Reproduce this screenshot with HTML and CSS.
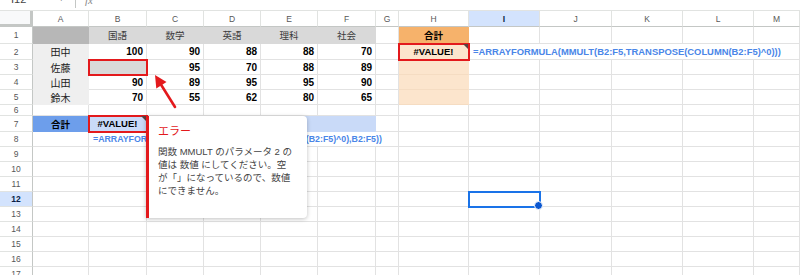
FILE: index.html
```html
<!DOCTYPE html>
<html lang="ja">
<head>
  <meta charset="UTF-8" />
  <title>合計 - スプレッドシート</title>
  <link rel="stylesheet" href="styles.css">
</head>
<body>
<div class="page">

  <!-- formula bar, mostly scrolled out of view -->
  <div class="formula-bar">
    <span class="name-box">I12</span>
    <span class="caret">&#9662;</span>
    <span class="bar-sep"></span>
    <span class="fx">fx</span>
  </div>

  <div class="sheet">
    <!-- column headers -->
    <div class="corner"></div>
    <div class="ch">A</div><div class="ch">B</div><div class="ch">C</div><div class="ch">D</div>
    <div class="ch">E</div><div class="ch">F</div><div class="ch">G</div><div class="ch">H</div>
    <div class="ch on">I</div><div class="ch">J</div><div class="ch">K</div><div class="ch">L</div><div class="ch">M</div>

    <!-- 1 -->
    <div class="rh">1</div>
    <div class="c fill-dark"></div>
    <div class="c fill-gray ctr">国語</div>
    <div class="c fill-gray ctr">数学</div>
    <div class="c fill-gray ctr">英語</div>
    <div class="c fill-gray ctr">理科</div>
    <div class="c fill-gray ctr">社会</div>
    <div class="c"></div>
    <div class="c fill-orange ctr b">合計</div>
    <div class="c"></div><div class="c"></div><div class="c"></div><div class="c"></div><div class="c"></div>

    <!-- 2 -->
    <div class="rh">2</div>
    <div class="c fill-light ctr">田中</div>
    <div class="c num">100</div>
    <div class="c num">90</div>
    <div class="c num">88</div>
    <div class="c num">88</div>
    <div class="c num">70</div>
    <div class="c"></div>
    <div class="c fill-peach ctr b mark err">#VALUE!</div>
    <div class="c formula span5">=ARRAYFORMULA(MMULT(B2:F5,TRANSPOSE(COLUMN(B2:F5)^0)))</div>

    <!-- 3 -->
    <div class="rh">3</div>
    <div class="c fill-light ctr">佐藤</div>
    <div class="c fill-gray mark"></div>
    <div class="c num">95</div>
    <div class="c num">70</div>
    <div class="c num">88</div>
    <div class="c num">89</div>
    <div class="c"></div>
    <div class="c fill-peach"></div>
    <div class="c"></div><div class="c"></div><div class="c"></div><div class="c"></div><div class="c"></div>

    <!-- 4 -->
    <div class="rh">4</div>
    <div class="c fill-light ctr">山田</div>
    <div class="c num">90</div>
    <div class="c num">89</div>
    <div class="c num">95</div>
    <div class="c num">95</div>
    <div class="c num">90</div>
    <div class="c"></div>
    <div class="c fill-peach"></div>
    <div class="c"></div><div class="c"></div><div class="c"></div><div class="c"></div><div class="c"></div>

    <!-- 5 -->
    <div class="rh">5</div>
    <div class="c fill-light ctr">鈴木</div>
    <div class="c num">70</div>
    <div class="c num">55</div>
    <div class="c num">62</div>
    <div class="c num">80</div>
    <div class="c num">65</div>
    <div class="c"></div>
    <div class="c fill-peach"></div>
    <div class="c"></div><div class="c"></div><div class="c"></div><div class="c"></div><div class="c"></div>

    <!-- 6 -->
    <div class="rh">6</div>
    <div class="c"></div><div class="c"></div><div class="c"></div><div class="c"></div><div class="c"></div>
    <div class="c"></div><div class="c"></div><div class="c"></div><div class="c"></div><div class="c"></div>
    <div class="c"></div><div class="c"></div><div class="c"></div>

    <!-- 7 -->
    <div class="rh">7</div>
    <div class="c fill-blue ctr b">合計</div>
    <div class="c fill-sky ctr b mark err">#VALUE!</div>
    <div class="c fill-sky"></div><div class="c fill-sky"></div><div class="c fill-sky"></div><div class="c fill-sky"></div>
    <div class="c"></div><div class="c"></div><div class="c"></div><div class="c"></div><div class="c"></div>
    <div class="c"></div><div class="c"></div>

    <!-- 8 -->
    <div class="rh">8</div>
    <div class="c"></div>
    <div class="c formula small span6">=ARRAYFORMULA(MMULT(TRANSPOSE(COLUMN(B2:F5)^0),B2:F5))</div>
    <div class="c"></div><div class="c"></div><div class="c"></div><div class="c"></div><div class="c"></div><div class="c"></div>

    <!-- 9 -->
    <div class="rh">9</div>
    <div class="c"></div><div class="c"></div><div class="c"></div><div class="c"></div><div class="c"></div>
    <div class="c"></div><div class="c"></div><div class="c"></div><div class="c"></div><div class="c"></div>
    <div class="c"></div><div class="c"></div><div class="c"></div>

    <!-- 10 -->
    <div class="rh">10</div>
    <div class="c"></div><div class="c"></div><div class="c"></div><div class="c"></div><div class="c"></div>
    <div class="c"></div><div class="c"></div><div class="c"></div><div class="c"></div><div class="c"></div>
    <div class="c"></div><div class="c"></div><div class="c"></div>

    <!-- 11 -->
    <div class="rh">11</div>
    <div class="c"></div><div class="c"></div><div class="c"></div><div class="c"></div><div class="c"></div>
    <div class="c"></div><div class="c"></div><div class="c"></div><div class="c"></div><div class="c"></div>
    <div class="c"></div><div class="c"></div><div class="c"></div>

    <!-- 12 -->
    <div class="rh on">12</div>
    <div class="c"></div><div class="c"></div><div class="c"></div><div class="c"></div>
    <div class="c"></div><div class="c"></div><div class="c"></div><div class="c"></div>
    <div class="c sel"></div>
    <div class="c"></div><div class="c"></div><div class="c"></div><div class="c"></div>

    <!-- 13 -->
    <div class="rh">13</div>
    <div class="c"></div><div class="c"></div><div class="c"></div><div class="c"></div><div class="c"></div>
    <div class="c"></div><div class="c"></div><div class="c"></div><div class="c"></div><div class="c"></div>
    <div class="c"></div><div class="c"></div><div class="c"></div>

    <!-- 14 -->
    <div class="rh">14</div>
    <div class="c"></div><div class="c"></div><div class="c"></div><div class="c"></div><div class="c"></div>
    <div class="c"></div><div class="c"></div><div class="c"></div><div class="c"></div><div class="c"></div>
    <div class="c"></div><div class="c"></div><div class="c"></div>

    <!-- 15 -->
    <div class="rh">15</div>
    <div class="c"></div><div class="c"></div><div class="c"></div><div class="c"></div><div class="c"></div>
    <div class="c"></div><div class="c"></div><div class="c"></div><div class="c"></div><div class="c"></div>
    <div class="c"></div><div class="c"></div><div class="c"></div>

    <!-- 16 -->
    <div class="rh">16</div>
    <div class="c"></div><div class="c"></div><div class="c"></div><div class="c"></div><div class="c"></div>
    <div class="c"></div><div class="c"></div><div class="c"></div><div class="c"></div><div class="c"></div>
    <div class="c"></div><div class="c"></div><div class="c"></div>

    <!-- 17 -->
    <div class="rh">17</div>
    <div class="c"></div><div class="c"></div><div class="c"></div><div class="c"></div><div class="c"></div>
    <div class="c"></div><div class="c"></div><div class="c"></div><div class="c"></div><div class="c"></div>
    <div class="c"></div><div class="c"></div><div class="c"></div>
  </div>

  <!-- annotation arrow pointing at the empty cell B3 -->
  <svg class="arrow" width="40" height="50" viewBox="0 0 40 50">
    <line x1="30" y1="45" x2="16.4" y2="23.2" stroke="#e3191c" stroke-width="2.6" stroke-linecap="round"/>
    <polygon points="10,13 21.5,20 11.3,26.4" fill="#e3191c"/>
  </svg>

  <!-- error popup for B7 -->
  <div class="err-tip">
    <div class="err-title">エラー</div>
    <div class="err-body">
      関数 MMULT のパラメータ 2 の<br>
      値は 数値 にしてください。空<br>
      が「」になっているので、数値<br>
      にできません。
    </div>
  </div>

</div>
</body>
</html>
```

FILE: styles.css
```css
* {
  margin: 0;
  padding: 0;
  box-sizing: border-box;
}

body {
  font-family: "Liberation Sans", Arial, "Noto Sans CJK JP", sans-serif;
  background-color: #ffffff;
  color: #000;
  overflow: hidden;
}

.page {
  position: relative;
  width: 800px;
  height: 275px;
  overflow: hidden;
}

/* formula bar */
.formula-bar {
  height: 11px;
  display: flex;
  align-items: flex-start;
  border-bottom: 1px solid #e1e3e1;
  overflow: hidden;
  color: #444;
  font-size: 11px;
  line-height: 12px;
}

.name-box {
  margin: -7px 0 0 11px;
  width: 45px;
}

.caret {
  margin: -8px 0 0 3px;
  font-size: 9px;
  width: 16px;
}

.bar-sep {
  width: 1px;
  height: 8px;
  background-color: #c4c7c5;
}

.fx {
  margin: -6px 0 0 9px;
  font-style: italic;
  font-family: "Liberation Serif", serif;
  color: #888;
}

/* grid */
.sheet {
  display: grid;
  grid-template-columns: 33px 56px 58px 57px 57px 57px 58px 23px 70px 71px 72px 71px 71px 46px;
  grid-template-rows: 16px 17px 16px 15px 15px 15px 11px 16px repeat(10, 15px);
}

.corner {
  background-color: #f8f9fa;
  border-right: 3px solid #c4c7c5;
  border-bottom: 3px solid #c4c7c5;
}

.ch,
.rh {
  display: flex;
  align-items: center;
  justify-content: center;
  font-size: 8.5px;
  color: #575757;
  background-color: #ffffff;
}

.ch {
  border-right: 1px solid #e1e3e1;
  border-bottom: 1px solid #c4c7c5;
}

.rh {
  border-right: 1px solid #c4c7c5;
  border-bottom: 1px solid #e1e3e1;
}

.ch.on,
.rh.on {
  background-color: #d3e3fd;
  color: #0b1f44;
  font-weight: bold;
}

.c {
  position: relative;
  display: flex;
  align-items: center;
  padding: 0 3px;
  border-right: 1px solid #e2e2e2;
  border-bottom: 1px solid #e2e2e2;
  font-size: 9.5px;
  white-space: nowrap;
  min-width: 0;
}

.ctr {
  justify-content: center;
  font-family: "Liberation Sans", "Noto Sans CJK JP", sans-serif;
  color: #222;
}

.b {
  font-weight: bold;
  color: #000;
}

.num {
  justify-content: flex-end;
  font-weight: bold;
  font-size: 10px;
}

/* fills */
.fill-dark,
.fill-gray,
.fill-light,
.fill-orange,
.fill-peach,
.fill-blue,
.fill-sky {
  border-color: transparent;
}

.fill-dark { background-color: #b7b7b7; }
.fill-gray { background-color: #d9d9d9; color: #3c3c3c; }
.fill-light { background-color: #efefef; font-size: 10px; }
.fill-orange { background-color: #f6b26b; }
.fill-peach { background-color: #fce5cd; }
.fill-blue { background-color: #6d9eeb; }
.fill-sky { background-color: #c9daf8; }

.fill-peach + .fill-peach,
.fill-peach {
  border-bottom-color: #f5dcc2;
}

/* text that spills into the empty cells on its right */
.formula {
  color: #4a86e8;
  font-weight: bold;
  font-size: 9.4px;
  padding-left: 4px;
  overflow: visible;
}

.formula.small {
  font-size: 8.8px;
}

.span5 { grid-column: span 5; }
.span6 { grid-column: span 6; }

/* red annotation frames */
.mark {
  outline: 2px solid #e3191c;
  outline-offset: -1px;
  z-index: 2;
}

.err::after {
  content: "";
  position: absolute;
  top: 0;
  right: 0;
  border-top: 5px solid #5a4040;
  border-left: 5px solid transparent;
}

/* active cell */
.sel {
  outline: 2px solid #1a73e8;
  outline-offset: -1px;
  z-index: 2;
}

.sel::after {
  content: "";
  position: absolute;
  right: -4px;
  bottom: -4px;
  width: 7px;
  height: 7px;
  border-radius: 50%;
  background-color: #0b57d0;
  border: 1px solid #ffffff;
}

/* overlays */
.arrow {
  position: absolute;
  left: 145px;
  top: 62px;
  z-index: 6;
}

.err-tip {
  position: absolute;
  left: 146px;
  top: 116px;
  width: 161px;
  height: 102px;
  background-color: #ffffff;
  border-left: 3px solid #e3191c;
  border-radius: 0 4px 4px 0;
  box-shadow: 0 1px 4px rgba(0, 0, 0, 0.25);
  padding: 8px 0 0 9px;
  z-index: 5;
  font-family: "Liberation Sans", "Noto Sans CJK JP", sans-serif;
}

.err-title {
  color: #e3191c;
  font-size: 11px;
  line-height: 14px;
}

.err-body {
  margin-top: 7px;
  color: #444;
  font-size: 9.5px;
  line-height: 13px;
  white-space: nowrap;
}
```
